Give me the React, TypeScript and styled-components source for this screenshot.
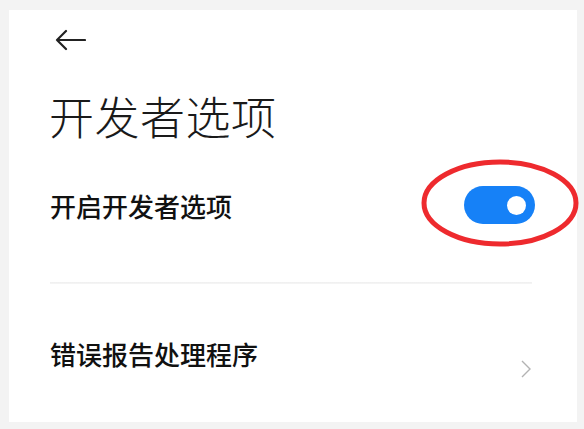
import React from "react";
import styled, { createGlobalStyle } from "styled-components";

const GlobalStyle = createGlobalStyle`
  html, body {
    margin: 0;
    padding: 0;
    background: #f3f3f3;
  }
  body {
    font-family: "Noto Sans CJK SC", "Noto Sans", sans-serif;
  }
`;

const Page = styled.div`
  width: 584px;
  height: 429px;
  padding: 10px 7px 7px 9px;
  box-sizing: border-box;
`;

const Card = styled.div`
  background: #ffffff;
  height: 412px;
  padding: 0 45px 0 41px;
  box-sizing: border-box;
  display: flex;
  flex-direction: column;
`;

const BackButton = styled.button`
  margin: 18px 0 0 5px;
  padding: 0;
  width: 32px;
  height: 24px;
  border: none;
  background: none;
  display: flex;
  align-items: center;
  cursor: pointer;
`;

const Title = styled.h1`
  margin: 36px 0 0 -1px;
  font-size: 45px;
  font-weight: 300;
  line-height: 56px;
  color: #1a1a1a;
  letter-spacing: 0.5px;
`;

const Row = styled.div<{ $height: number }>`
  height: ${(p) => p.$height}px;
  display: flex;
  align-items: center;
  justify-content: space-between;
  position: relative;
`;

const Label = styled.span`
  font-size: 26px;
  font-weight: 500;
  color: #111111;
`;

const Divider = styled.hr`
  margin: 16px 0 0 0;
  border: none;
  height: 2px;
  background: linear-gradient(#efefef, #f6f6f6);
`;

const Track = styled.div`
  width: 71px;
  height: 38px;
  border-radius: 19px;
  background: #1681f7;
  margin-right: -3px;
  position: relative;
  display: flex;
  align-items: center;
  justify-content: flex-end;
  padding-right: 9px;
  box-sizing: border-box;
`;

const Knob = styled.div`
  width: 19px;
  height: 19px;
  border-radius: 50%;
  background: #ffffff;
`;

const Highlight = styled.svg`
  position: absolute;
  right: -50px;
  top: 13px;
  pointer-events: none;
`;

const Chevron = styled.svg`
  margin: 32px 0 0 0;
`;

export default function App() {
  return (
    <>
      <GlobalStyle />
      <Page>
        <Card>
          <BackButton aria-label="返回">
            <svg width="31" height="22" viewBox="0 0 31 22">
              <path
                d="M30 11 H2 M11 2 L2 11 L11 20"
                fill="none"
                stroke="#222"
                strokeWidth="2.2"
                strokeLinecap="round"
                strokeLinejoin="round"
              />
            </svg>
          </BackButton>
          <Title>开发者选项</Title>
          <Row $height={122}>
            <Label>开启开发者选项</Label>
            <Track>
              <Knob />
            </Track>
            <Highlight width="162" height="92" viewBox="0 0 162 92">
              <ellipse
                cx="80"
                cy="46"
                rx="76"
                ry="41"
                fill="none"
                stroke="#ee2a2e"
                strokeWidth="5"
              />
            </Highlight>
          </Row>
          <Divider />
          <Row $height={138}>
            <Label>错误报告处理程序</Label>
            <Chevron width="12" height="20" viewBox="0 0 12 20">
              <path
                d="M2 2 L10 10 L2 18"
                fill="none"
                stroke="#b3b3b3"
                strokeWidth="1.4"
              />
            </Chevron>
          </Row>
        </Card>
      </Page>
    </>
  );
}
